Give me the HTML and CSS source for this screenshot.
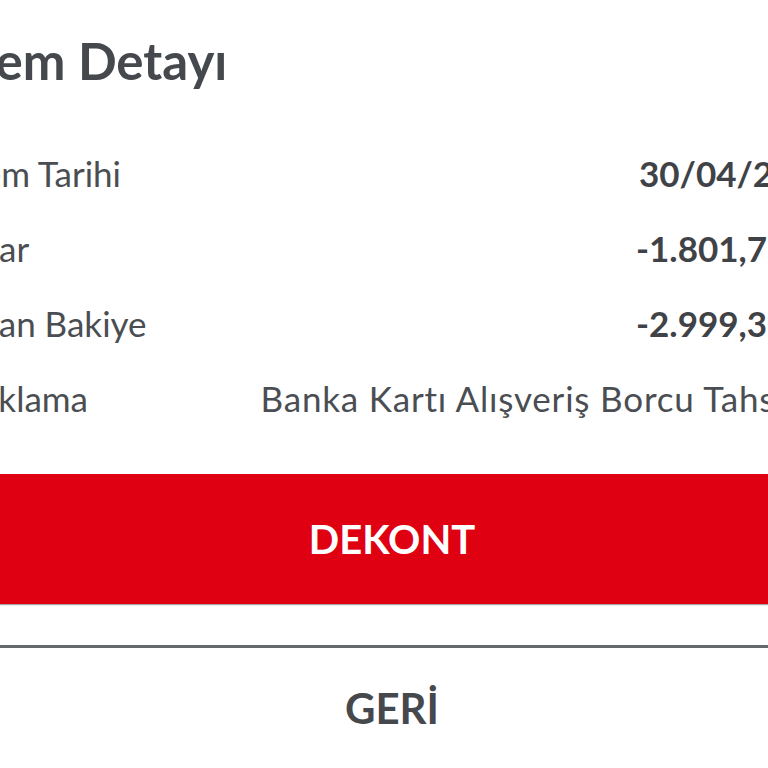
FILE: index.html
```html
<!DOCTYPE html>
<html lang="tr">
<head>
<meta charset="utf-8">
<title>İşlem Detayı</title>
<link rel="stylesheet" href="styles.css">
</head>
<body>
<div class="screen">
  <h1 class="title">İşlem Detayı</h1>
  <div class="rows">
    <div class="row"><span class="label">İşlem Tarihi</span><span class="value">30/04/2024</span></div>
    <div class="row"><span class="label">Tutar</span><span class="value">-1.801,75 TL</span></div>
    <div class="row"><span class="label">Kalan Bakiye</span><span class="value">-2.999,35 TL</span></div>
    <div class="row"><span class="label">Açıklama</span><span class="value desc">Banka Kartı Alışveriş Borcu Tahsilatı</span></div>
  </div>
  <button class="btn-primary">DEKONT</button>
  <div class="divider"></div>
  <button class="btn-back">GERİ</button>
</div>
</body>
</html>
```
FILE: styles.css
```css
html, body {
  margin: 0;
  padding: 0;
  background: #ffffff;
  overflow: hidden;
  width: 768px;
  height: 768px;
}
.screen {
  width: 944px;
  margin-left: -80px;
  font-family: Lato, "Open Sans", sans-serif;
  color: #4a4e52;
}
.title {
  margin: 0;
  padding: 29px 0 0 26px;
  font-size: 51px;
  line-height: 64px;
  font-weight: 700;
  color: #45494d;
}
.rows {
  padding: 58px 30px 0 30px;
}
.row {
  display: flex;
  justify-content: space-between;
  align-items: baseline;
  height: 75px;
  font-size: 35px;
  line-height: 44px;
  white-space: nowrap;
}
.label {
  color: #4a4e52;
}
.value {
  font-weight: 700;
  color: #3f4347;
}
.value.desc {
  font-weight: 400;
  color: #4a4e52;
  letter-spacing: 0.8px;
}
.btn-primary {
  display: block;
  width: 100%;
  height: 130px;
  margin-top: 23px;
  border: 0;
  background: #df0011;
  color: #ffffff;
  font-family: Lato, sans-serif;
  font-size: 40px;
  font-weight: 700;
  box-shadow: 0 1px 1px rgba(0,0,0,0.35);
}
.divider {
  height: 3px;
  margin-top: 41px;
  background: #66696c;
}
.btn-back {
  display: block;
  width: 100%;
  height: 120px;
  border: 0;
  background: transparent;
  color: #45494d;
  font-family: Lato, sans-serif;
  font-size: 42px;
  font-weight: 700;
}
```
